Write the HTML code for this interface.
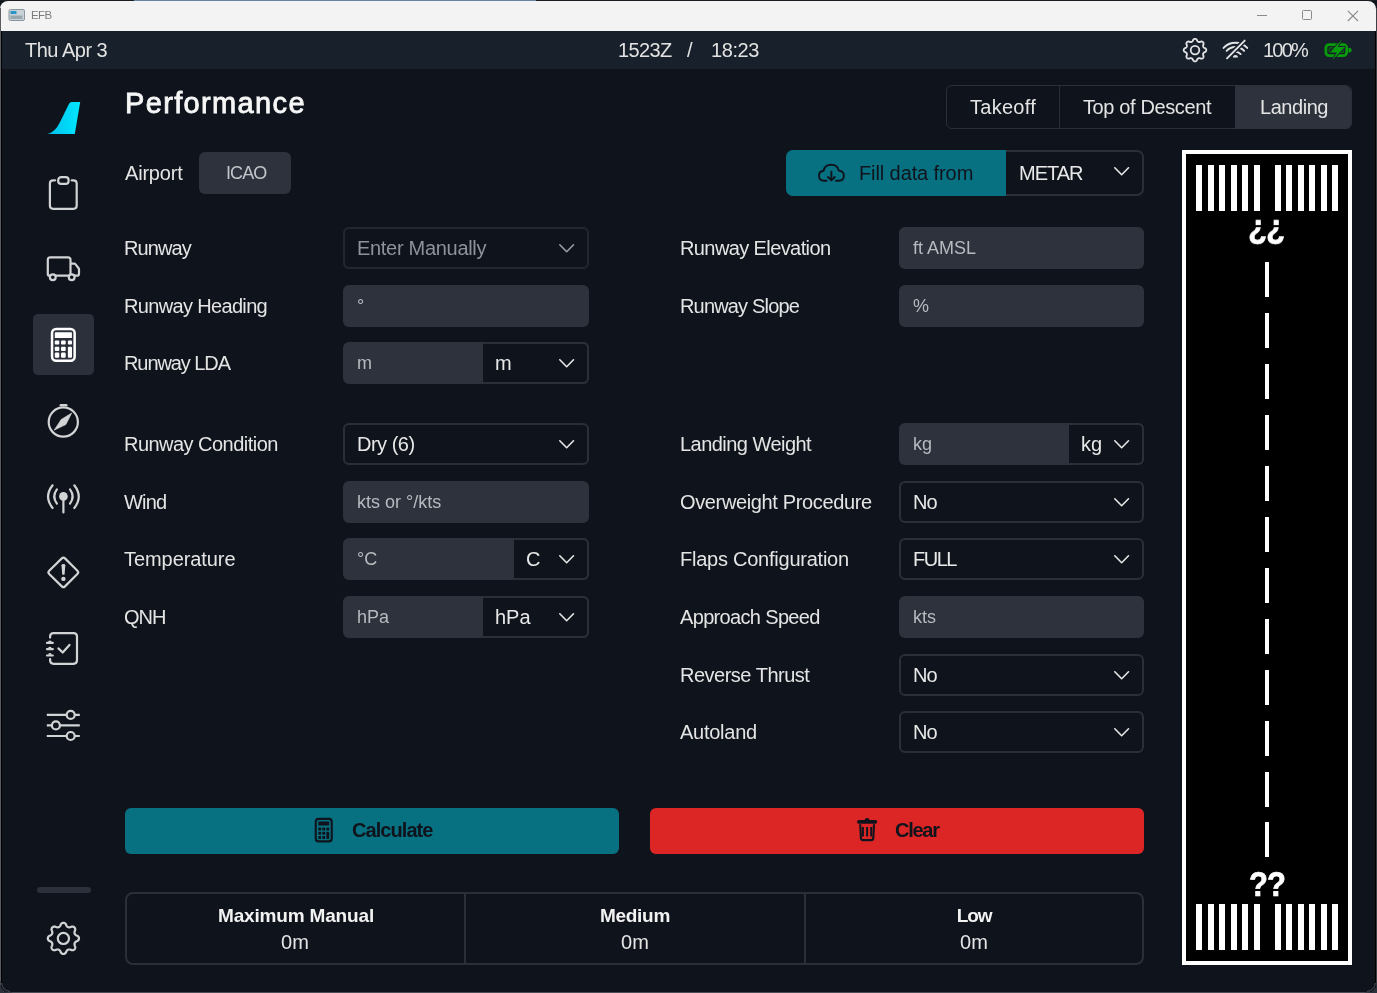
<!DOCTYPE html>
<html><head><meta charset="utf-8">
<style>
*{box-sizing:border-box;margin:0;padding:0}
html,body{width:1377px;height:993px;overflow:hidden;background:#1d2128;font-family:"Liberation Sans",sans-serif;-webkit-font-smoothing:antialiased}
.b,.t,svg{position:absolute}
.t{white-space:nowrap;will-change:transform}
svg{overflow:visible}
#win{position:absolute;left:0;top:0;width:1377px;height:993px;background:#0f141c;overflow:hidden}
</style></head>
<body>
<div id="win">
<div class="b" style="left:0px;top:0px;width:1377px;height:1px;background:#1c1d22"></div>

<div class="b" style="left:134px;top:0px;width:402px;height:1px;background:#6884a4"></div>

<div class="b" style="left:0px;top:1px;width:1376px;height:30px;background:#f3f3f3;border-radius:8px 8px 0 0"></div>

<svg style="left:8px;top:8px" width="18" height="14" viewBox="0 0 18 14"><rect x="1" y="1.5" width="15.5" height="11" rx="1.5" fill="#c9d2d8" stroke="#8a969e" stroke-width="1"/><rect x="2.5" y="3" width="6" height="3" fill="#2a93c9"/><rect x="2.5" y="7.5" width="12" height="3.5" fill="#9aa6ae"/></svg>
<div class="t" style="left:30.5px;top:9.49px;font-size:11.5px;line-height:12.85px;letter-spacing:-0.6px;color:#7c7c7c;">EFB</div>

<div class="b" style="left:1257.2px;top:14.8px;width:9.8px;height:1px;background:#8a8a8a"></div>

<div class="b" style="left:1302px;top:10.2px;width:9.9px;height:9.9px;border:1px solid #8a8a8a;border-radius:1.5px"></div>

<svg style="left:1347px;top:9.5px" width="12" height="12" viewBox="0 0 12 12"><path d="M0.8 0.8 L11 11 M11 0.8 L0.8 11" stroke="#8a8a8a" stroke-width="1.1"/></svg>
<div class="b" style="left:0px;top:31px;width:1376px;height:38.3px;background:#18202b"></div>

<div class="t" style="left:25.4px;top:39.10px;font-size:20px;line-height:22.34px;letter-spacing:-0.5px;color:#e2e2e2;">Thu Apr 3</div>

<div class="t" style="left:618.1px;top:39.10px;font-size:20px;line-height:22.34px;letter-spacing:-0.6px;color:#e2e2e2;">1523Z</div>

<div class="t" style="left:687.0px;top:39.10px;font-size:20px;line-height:22.34px;color:#e2e2e2;">/</div>

<div class="t" style="left:711.0px;top:39.10px;font-size:20px;line-height:22.34px;letter-spacing:-0.4px;color:#e2e2e2;">18:23</div>

<div class="t" style="left:1262.7px;top:39.30px;font-size:20px;line-height:22.34px;letter-spacing:-1.8px;color:#e2e2e2;">100%</div>


<svg style="left:1175px;top:33px" width="40" height="35" viewBox="0 0 40 35"><path d="M20.00 5.80 L20.30 5.82 L20.59 5.89 L20.87 6.00 L21.15 6.15 L21.41 6.35 L21.66 6.60 L21.89 6.93 L22.05 7.46 L22.23 7.79 L22.42 8.06 L22.61 8.28 L22.80 8.48 L23.00 8.64 L23.20 8.77 L23.41 8.88 L23.63 8.95 L23.86 9.00 L24.12 9.02 L24.39 9.02 L24.68 8.99 L25.00 8.94 L25.37 8.84 L25.86 8.57 L26.25 8.50 L26.60 8.50 L26.93 8.55 L27.23 8.63 L27.51 8.76 L27.77 8.92 L27.99 9.11 L28.18 9.33 L28.34 9.59 L28.47 9.87 L28.55 10.17 L28.60 10.50 L28.60 10.85 L28.53 11.24 L28.26 11.73 L28.16 12.10 L28.11 12.42 L28.08 12.71 L28.08 12.98 L28.10 13.24 L28.15 13.47 L28.22 13.69 L28.33 13.90 L28.46 14.10 L28.62 14.30 L28.82 14.49 L29.04 14.68 L29.31 14.87 L29.64 15.05 L30.17 15.21 L30.50 15.44 L30.75 15.69 L30.95 15.95 L31.10 16.23 L31.21 16.51 L31.28 16.80 L31.30 17.10 L31.28 17.40 L31.21 17.69 L31.10 17.97 L30.95 18.25 L30.75 18.51 L30.50 18.76 L30.17 18.99 L29.64 19.15 L29.31 19.33 L29.04 19.52 L28.82 19.71 L28.62 19.90 L28.46 20.10 L28.33 20.30 L28.22 20.51 L28.15 20.73 L28.10 20.96 L28.08 21.22 L28.08 21.49 L28.11 21.78 L28.16 22.10 L28.26 22.47 L28.53 22.96 L28.60 23.35 L28.60 23.70 L28.55 24.03 L28.47 24.33 L28.34 24.61 L28.18 24.87 L27.99 25.09 L27.77 25.28 L27.51 25.44 L27.23 25.57 L26.93 25.65 L26.60 25.70 L26.25 25.70 L25.86 25.63 L25.37 25.36 L25.00 25.26 L24.68 25.21 L24.39 25.18 L24.12 25.18 L23.86 25.20 L23.63 25.25 L23.41 25.32 L23.20 25.43 L23.00 25.56 L22.80 25.72 L22.61 25.92 L22.42 26.14 L22.23 26.41 L22.05 26.74 L21.89 27.27 L21.66 27.60 L21.41 27.85 L21.15 28.05 L20.87 28.20 L20.59 28.31 L20.30 28.38 L20.00 28.40 L19.70 28.38 L19.41 28.31 L19.13 28.20 L18.85 28.05 L18.59 27.85 L18.34 27.60 L18.11 27.27 L17.95 26.74 L17.77 26.41 L17.58 26.14 L17.39 25.92 L17.20 25.72 L17.00 25.56 L16.80 25.43 L16.59 25.32 L16.37 25.25 L16.14 25.20 L15.88 25.18 L15.61 25.18 L15.32 25.21 L15.00 25.26 L14.63 25.36 L14.14 25.63 L13.75 25.70 L13.40 25.70 L13.07 25.65 L12.77 25.57 L12.49 25.44 L12.23 25.28 L12.01 25.09 L11.82 24.87 L11.66 24.61 L11.53 24.33 L11.45 24.03 L11.40 23.70 L11.40 23.35 L11.47 22.96 L11.74 22.47 L11.84 22.10 L11.89 21.78 L11.92 21.49 L11.92 21.22 L11.90 20.96 L11.85 20.73 L11.78 20.51 L11.67 20.30 L11.54 20.10 L11.38 19.90 L11.18 19.71 L10.96 19.52 L10.69 19.33 L10.36 19.15 L9.83 18.99 L9.50 18.76 L9.25 18.51 L9.05 18.25 L8.90 17.97 L8.79 17.69 L8.72 17.40 L8.70 17.10 L8.72 16.80 L8.79 16.51 L8.90 16.23 L9.05 15.95 L9.25 15.69 L9.50 15.44 L9.83 15.21 L10.36 15.05 L10.69 14.87 L10.96 14.68 L11.18 14.49 L11.38 14.30 L11.54 14.10 L11.67 13.90 L11.78 13.69 L11.85 13.47 L11.90 13.24 L11.92 12.98 L11.92 12.71 L11.89 12.42 L11.84 12.10 L11.74 11.73 L11.47 11.24 L11.40 10.85 L11.40 10.50 L11.45 10.17 L11.53 9.87 L11.66 9.59 L11.82 9.33 L12.01 9.11 L12.23 8.92 L12.49 8.76 L12.77 8.63 L13.07 8.55 L13.40 8.50 L13.75 8.50 L14.14 8.57 L14.63 8.84 L15.00 8.94 L15.32 8.99 L15.61 9.02 L15.88 9.02 L16.14 9.00 L16.37 8.95 L16.59 8.88 L16.80 8.77 L17.00 8.64 L17.20 8.48 L17.39 8.28 L17.58 8.06 L17.77 7.79 L17.95 7.46 L18.11 6.93 L18.34 6.60 L18.59 6.35 L18.85 6.15 L19.13 6.00 L19.41 5.89 L19.70 5.82Z" fill="none" stroke="#e2e3e5" stroke-width="1.8" stroke-linejoin="round"/><circle cx="20" cy="17.1" r="4.3" fill="none" stroke="#e2e3e5" stroke-width="1.8"/></svg>
<svg style="left:1215px;top:33px" width="40" height="35" viewBox="0 0 40 35"><g fill="none" stroke="#e2e3e5" stroke-width="1.9" stroke-linecap="round"><path d="M8.55 14.95 A16.2 16.2 0 0 1 32.25 14.95"/><path d="M11.62 17.82 A12 12 0 0 1 29.18 17.82"/><path d="M15.13 21.09 A7.2 7.2 0 0 1 25.67 21.09"/></g><path d="M17.9 24.6 A2.5 2.5 0 0 1 22.9 24.6 Z" fill="#e2e3e5"/><path d="M12 25.3 L29.7 7.6" stroke="#18202b" stroke-width="5" stroke-linecap="round"/><path d="M12 25.3 L29.7 7.6" stroke="#e2e3e5" stroke-width="1.9" stroke-linecap="round"/></svg>
<svg style="left:1320px;top:36px" width="36" height="28" viewBox="0 0 36 28"><rect x="5.9" y="8.6" width="20.7" height="11" rx="3.2" fill="none" stroke="#079a0b" stroke-width="2.8"/><rect x="9.3" y="11.8" width="13.9" height="4.6" rx="0.5" fill="none" stroke="#06700c" stroke-width="1.2"/><path d="M28.4 11.8 A3.2 2.4 0 0 1 28.4 16.6 Z" fill="#079a0b"/><path d="M22 3.8 L9.8 16.6 H16.8 L12.2 24.2 L25 11 H17.8 Z" fill="#079a0b" stroke="#18202b" stroke-width="1.6" paint-order="stroke" stroke-linejoin="round"/></svg>

<div class="b" style="left:33.1px;top:314.2px;width:60.5px;height:60.5px;background:#2b303b;border-radius:5px"></div>

<div class="b" style="left:37.1px;top:886.8px;width:53.9px;height:6px;background:#2b303a;border-radius:3px"></div>


<svg style="left:40px;top:90px" width="50" height="50" viewBox="0 0 50 50"><defs><linearGradient id="lg" x1="0" y1="0" x2="1" y2="0"><stop offset="0" stop-color="#00c0ec"/><stop offset="1" stop-color="#00e6ff"/></linearGradient></defs><path d="M28.8 14.2 Q29.8 12.1 31.8 12.1 L40.2 12.1 L34.8 43.9 L7.4 43.9 Q15 42.5 19.8 32.5 Z" fill="url(#lg)"/></svg>
<svg style="left:40px;top:170px" width="50" height="50" viewBox="0 0 50 50"><path d="M15.1 10.3 H13.2 Q9.9 10.3 9.9 13.6 V35.5 Q9.9 38.8 13.2 38.8 H33.4 Q36.7 38.8 36.7 35.5 V13.6 Q36.7 10.3 33.4 10.3 H31.7" fill="none" stroke="#d2d3d5" stroke-width="2.2" stroke-linecap="round" stroke-linejoin="round"/><rect x="18.2" y="7.1" width="10.4" height="6.8" rx="3" fill="none" stroke="#d2d3d5" stroke-width="2.2" stroke-linecap="round" stroke-linejoin="round"/></svg>
<svg style="left:40px;top:245px" width="50" height="50" viewBox="0 0 50 50"><path d="M9.6 30.7 Q7.8 30.7 7.8 28.9 V14.8 Q7.8 12.3 10.3 12.3 H28 Q30.5 12.3 30.5 14.8 V30.7 M15.9 30.7 H28.6 M30.5 18.6 H34.3 Q35 18.6 35.4 19.1 L38.6 23.2 Q39 23.7 39 24.4 V28.7 Q39 30.7 37 30.7 H34.8" fill="none" stroke="#d2d3d5" stroke-width="2.2" stroke-linecap="round" stroke-linejoin="round"/><circle cx="12.8" cy="32.2" r="2.9" fill="#0f141c" stroke="#d2d3d5" stroke-width="2.2"/><circle cx="31.7" cy="32.2" r="2.9" fill="#0f141c" stroke="#d2d3d5" stroke-width="2.2"/></svg>
<svg style="left:50px;top:327px" width="28" height="36" viewBox="0 0 28 36"><rect x="2.05" y="1.95" width="22.6" height="31.8" rx="4" fill="none" stroke="#ffffff" stroke-width="2.5"/><g fill="#fff"><rect x="4.8" y="5.3" width="17.1" height="5.8" rx="0.6"/><rect x="4.8" y="13.6" width="4.5" height="4" rx="1"/><rect x="11" y="13.6" width="4.7" height="4" rx="1"/><rect x="17.9" y="13.6" width="4.1" height="4" rx="1"/><rect x="4.8" y="19.8" width="4.5" height="4.3" rx="1"/><rect x="11" y="19.8" width="4.7" height="4.3" rx="1"/><rect x="17.9" y="19.8" width="4.1" height="10.9" rx="1"/><rect x="4.8" y="25.6" width="4.5" height="5.1" rx="1.2"/><rect x="11" y="25.6" width="4.7" height="5.1" rx="1.2"/></g></svg>
<svg style="left:38px;top:395px" width="50" height="50" viewBox="0 0 50 50"><circle cx="25.3" cy="27.05" r="14.6" fill="none" stroke="#d2d3d5" stroke-width="2.2" stroke-linecap="round" stroke-linejoin="round"/><path d="M21.6 11.2 V10.3 Q21.6 9 22.9 9 H28.2 Q29.5 9 29.5 10.3 V11.2 Z" fill="#d2d3d5"/><path d="M33.7 18.1 L27.9 29.5 L16.1 35.2 L23.2 24.4 Z" fill="#d2d3d5" stroke="#d2d3d5" stroke-width="0.6" stroke-linejoin="round"/></svg>
<svg style="left:38px;top:472px" width="50" height="50" viewBox="0 0 50 50"><circle cx="25.4" cy="24.4" r="4.3" fill="#d2d3d5"/><path d="M25.4 26 V40.4" fill="none" stroke="#d2d3d5" stroke-width="2.2" stroke-linecap="round" stroke-linejoin="round"/><path d="M18.9 17.4 Q13.6 24.5 18.9 31.7 M32 17.4 Q37.3 24.5 32 31.7 M14.6 13.3 Q5.6 24.7 14.6 36 M36.3 13.3 Q45.2 24.7 36.3 36" fill="none" stroke="#d2d3d5" stroke-width="2.2" stroke-linecap="round" stroke-linejoin="round"/></svg>
<svg style="left:38px;top:548px" width="50" height="50" viewBox="0 0 50 50"><path d="M23.8 10.4 Q25.4 8.8 27 10.4 L39.4 22.8 Q41 24.4 39.4 26 L27 38.4 Q25.4 40 23.8 38.4 L11.2 26 Q9.6 24.4 11.2 22.8 Z" fill="none" stroke="#d2d3d5" stroke-width="2.2" stroke-linecap="round" stroke-linejoin="round"/><path d="M23.5 17.2 Q23.5 16.1 25.4 16.1 Q27.3 16.1 27.3 17.2 L26.6 26.2 Q26.5 26.8 25.4 26.8 Q24.3 26.8 24.2 26.2 Z" fill="#d2d3d5"/><circle cx="25.4" cy="30.9" r="2.2" fill="#d2d3d5"/></svg>
<svg style="left:38px;top:623px" width="50" height="50" viewBox="0 0 50 50"><path d="M12.1 14.6 V13.6 Q12.1 10.1 15.6 10.1 H35.5 Q39 10.1 39 13.6 V37.3 Q39 40.8 35.5 40.8 H15.6 Q12.1 40.8 12.1 37.3 V36" fill="none" stroke="#d2d3d5" stroke-width="2.2" stroke-linecap="round" stroke-linejoin="round"/><path d="M9 19.9 H14.8 M9 26.2 H14.8 M9 32.5 H14.8" fill="none" stroke="#d2d3d5" stroke-width="2.2" stroke-linecap="round"/><path d="M10.6 19 Q11.9 17.2 13.2 19 M10.6 25.3 Q11.9 23.5 13.2 25.3 M10.6 31.6 Q11.9 29.8 13.2 31.6" fill="#d2d3d5" stroke="#d2d3d5" stroke-width="1.4"/><path d="M20.4 25.4 L24.7 29.5 L31.5 21.9" fill="none" stroke="#d2d3d5" stroke-width="2.2" stroke-linecap="round" stroke-linejoin="round"/></svg>
<svg style="left:38px;top:700px" width="50" height="50" viewBox="0 0 50 50"><path d="M8.8 14.9 H28.7 M36.7 14.9 H41.8 M8.8 25.4 H13.9 M21.9 25.4 H41.8 M8.8 36 H28.7 M36.7 36 H41.8" fill="none" stroke="#d2d3d5" stroke-width="2.2" stroke-linecap="butt"/><circle cx="32.7" cy="14.9" r="4" fill="none" stroke="#d2d3d5" stroke-width="2.2" stroke-linecap="round" stroke-linejoin="round"/><circle cx="17.9" cy="25.4" r="4" fill="none" stroke="#d2d3d5" stroke-width="2.2" stroke-linecap="round" stroke-linejoin="round"/><circle cx="32.7" cy="36" r="4" fill="none" stroke="#d2d3d5" stroke-width="2.2" stroke-linecap="round" stroke-linejoin="round"/></svg>
<svg style="left:38px;top:913px" width="50" height="50" viewBox="0 0 50 50"><path d="M25.40 9.80 L25.81 9.83 L26.21 9.93 L26.61 10.08 L26.99 10.30 L27.35 10.58 L27.69 10.93 L28.00 11.39 L28.22 12.15 L28.47 12.61 L28.73 12.98 L28.98 13.30 L29.24 13.57 L29.51 13.80 L29.78 13.99 L30.07 14.13 L30.37 14.23 L30.70 14.29 L31.05 14.32 L31.42 14.31 L31.83 14.27 L32.27 14.19 L32.78 14.04 L33.47 13.66 L34.01 13.55 L34.50 13.54 L34.96 13.60 L35.38 13.72 L35.77 13.88 L36.12 14.10 L36.43 14.37 L36.70 14.68 L36.92 15.03 L37.08 15.42 L37.20 15.84 L37.26 16.30 L37.25 16.79 L37.14 17.33 L36.76 18.02 L36.61 18.53 L36.53 18.97 L36.49 19.38 L36.48 19.75 L36.51 20.10 L36.57 20.43 L36.67 20.73 L36.81 21.02 L37.00 21.29 L37.23 21.56 L37.50 21.82 L37.82 22.07 L38.19 22.33 L38.65 22.58 L39.41 22.80 L39.87 23.11 L40.22 23.45 L40.50 23.81 L40.72 24.19 L40.87 24.59 L40.97 24.99 L41.00 25.40 L40.97 25.81 L40.87 26.21 L40.72 26.61 L40.50 26.99 L40.22 27.35 L39.87 27.69 L39.41 28.00 L38.65 28.22 L38.19 28.47 L37.82 28.73 L37.50 28.98 L37.23 29.24 L37.00 29.51 L36.81 29.78 L36.67 30.07 L36.57 30.37 L36.51 30.70 L36.48 31.05 L36.49 31.42 L36.53 31.83 L36.61 32.27 L36.76 32.78 L37.14 33.47 L37.25 34.01 L37.26 34.50 L37.20 34.96 L37.08 35.38 L36.92 35.77 L36.70 36.12 L36.43 36.43 L36.12 36.70 L35.77 36.92 L35.38 37.08 L34.96 37.20 L34.50 37.26 L34.01 37.25 L33.47 37.14 L32.78 36.76 L32.27 36.61 L31.83 36.53 L31.42 36.49 L31.05 36.48 L30.70 36.51 L30.37 36.57 L30.07 36.67 L29.78 36.81 L29.51 37.00 L29.24 37.23 L28.98 37.50 L28.73 37.82 L28.47 38.19 L28.22 38.65 L28.00 39.41 L27.69 39.87 L27.35 40.22 L26.99 40.50 L26.61 40.72 L26.21 40.87 L25.81 40.97 L25.40 41.00 L24.99 40.97 L24.59 40.87 L24.19 40.72 L23.81 40.50 L23.45 40.22 L23.11 39.87 L22.80 39.41 L22.58 38.65 L22.33 38.19 L22.07 37.82 L21.82 37.50 L21.56 37.23 L21.29 37.00 L21.02 36.81 L20.73 36.67 L20.43 36.57 L20.10 36.51 L19.75 36.48 L19.38 36.49 L18.97 36.53 L18.53 36.61 L18.02 36.76 L17.33 37.14 L16.79 37.25 L16.30 37.26 L15.84 37.20 L15.42 37.08 L15.03 36.92 L14.68 36.70 L14.37 36.43 L14.10 36.12 L13.88 35.77 L13.72 35.38 L13.60 34.96 L13.54 34.50 L13.55 34.01 L13.66 33.47 L14.04 32.78 L14.19 32.27 L14.27 31.83 L14.31 31.42 L14.32 31.05 L14.29 30.70 L14.23 30.37 L14.13 30.07 L13.99 29.78 L13.80 29.51 L13.57 29.24 L13.30 28.98 L12.98 28.73 L12.61 28.47 L12.15 28.22 L11.39 28.00 L10.93 27.69 L10.58 27.35 L10.30 26.99 L10.08 26.61 L9.93 26.21 L9.83 25.81 L9.80 25.40 L9.83 24.99 L9.93 24.59 L10.08 24.19 L10.30 23.81 L10.58 23.45 L10.93 23.11 L11.39 22.80 L12.15 22.58 L12.61 22.33 L12.98 22.07 L13.30 21.82 L13.57 21.56 L13.80 21.29 L13.99 21.02 L14.13 20.73 L14.23 20.43 L14.29 20.10 L14.32 19.75 L14.31 19.38 L14.27 18.97 L14.19 18.53 L14.04 18.02 L13.66 17.33 L13.55 16.79 L13.54 16.30 L13.60 15.84 L13.72 15.42 L13.88 15.03 L14.10 14.68 L14.37 14.37 L14.68 14.10 L15.03 13.88 L15.42 13.72 L15.84 13.60 L16.30 13.54 L16.79 13.55 L17.33 13.66 L18.02 14.04 L18.53 14.19 L18.97 14.27 L19.38 14.31 L19.75 14.32 L20.10 14.29 L20.43 14.23 L20.73 14.13 L21.02 13.99 L21.29 13.80 L21.56 13.57 L21.82 13.30 L22.07 12.98 L22.33 12.61 L22.58 12.15 L22.80 11.39 L23.11 10.93 L23.45 10.58 L23.81 10.30 L24.19 10.08 L24.59 9.93 L24.99 9.83Z" fill="none" stroke="#d2d3d5" stroke-width="2.2" stroke-linecap="round" stroke-linejoin="round"/><circle cx="25.4" cy="25.4" r="5.6" fill="none" stroke="#d2d3d5" stroke-width="2.2" stroke-linecap="round" stroke-linejoin="round"/></svg>

<div class="t" style="left:124.6px;top:87.45px;font-size:29px;line-height:32.39px;letter-spacing:1.35px;color:#f6f6f6;-webkit-text-stroke:0.85px #f6f6f6;">Performance</div>

<div class="b" style="left:946px;top:85px;width:406px;height:44px;border:1.2px solid #2a2f38;border-radius:6px"></div>

<div class="b" style="left:1235.2px;top:85.5px;width:116.3px;height:43px;background:#2d323c;border-radius:0 5.5px 5.5px 0"></div>

<div class="b" style="left:1059px;top:86px;width:1.2px;height:42px;background:#2a2f38"></div>

<div class="t" style="left:969.9px;top:95.50px;font-size:20px;line-height:22.34px;letter-spacing:0.27px;color:#e4e4e4;">Takeoff</div>

<div class="t" style="left:1083.3px;top:95.50px;font-size:20px;line-height:22.34px;letter-spacing:-0.38px;color:#e4e4e4;">Top of Descent</div>

<div class="t" style="left:1259.6px;top:95.50px;font-size:20px;line-height:22.34px;letter-spacing:-0.45px;color:#e4e4e4;">Landing</div>

<div class="t" style="left:125.3px;top:162.10px;font-size:20px;line-height:22.34px;letter-spacing:-0.2px;color:#e4e4e4;">Airport</div>

<div class="b" style="left:199.2px;top:152px;width:91.9px;height:42px;background:#2d323c;border-radius:6px"></div>

<div class="t" style="left:226.0px;top:163.11px;font-size:18px;line-height:20.11px;letter-spacing:-0.9px;color:#c2c5ca;">ICAO</div>

<div class="b" style="left:786px;top:150px;width:357.5px;height:46px;border:2px solid #2a2f38;border-radius:7px"></div>

<div class="b" style="left:786px;top:150px;width:220px;height:46px;background:#077081;border-radius:7px 0 0 7px"></div>

<svg style="left:817px;top:162px" width="30" height="22" viewBox="0 0 30 22"><path d="M9.5 18.7 H7 Q2 18.7 2 13.7 Q2 9.3 6.6 8.8 Q7.6 2.7 14.3 2.7 Q20.6 2.7 21.8 8.6 Q26.9 9 26.9 13.8 Q26.9 18.7 21.8 18.7 H19" fill="none" stroke="#0f141c" stroke-width="1.9" stroke-linecap="round" stroke-linejoin="round"/><path d="M14.4 9.6 V18.3 M11 15 L14.4 18.4 L17.8 15" fill="none" stroke="#0f141c" stroke-width="1.9" stroke-linecap="round" stroke-linejoin="round"/></svg>
<div class="t" style="left:859.0px;top:162.10px;font-size:20px;line-height:22.34px;letter-spacing:-0.1px;color:#0f141c;">Fill data from</div>

<div class="t" style="left:1019.2px;top:162.10px;font-size:20px;line-height:22.34px;letter-spacing:-1.0px;color:#e8e8e8;">METAR</div>

<svg style="left:1114px;top:167.00px" width="16" height="9" viewBox="0 0 16 9"><path d="M0.8 0.8 L7.65 7.7 L14.5 0.8" fill="none" stroke="#e6e6e6" stroke-width="1.6" stroke-linecap="round" stroke-linejoin="round"/></svg>
<div class="t" style="left:123.8px;top:236.90px;font-size:20px;line-height:22.34px;letter-spacing:-0.9px;color:#e4e4e4;">Runway</div>
<div class="b" style="left:343px;top:227px;width:246px;height:42px;border:2px solid #23282f;border-radius:6px"></div>
<div class="t" style="left:356.5px;top:236.90px;font-size:20px;line-height:22.34px;letter-spacing:-0.3px;color:#8e9299;">Enter Manually</div>
<svg style="left:558.5px;top:243.50px" width="16" height="9" viewBox="0 0 16 9"><path d="M0.8 0.8 L7.65 7.7 L14.5 0.8" fill="none" stroke="#9a9da3" stroke-width="1.6" stroke-linecap="round" stroke-linejoin="round"/></svg><div class="t" style="left:123.8px;top:294.90px;font-size:20px;line-height:22.34px;letter-spacing:-0.66px;color:#e4e4e4;">Runway Heading</div>
<div class="b" style="left:343px;top:285px;width:246px;height:42px;background:#2d323c;border-radius:6px"></div>
<div class="t" style="left:356.5px;top:296.31px;font-size:18px;line-height:20.11px;color:#b7babf;">&deg;</div>
<div class="t" style="left:123.8px;top:351.90px;font-size:20px;line-height:22.34px;letter-spacing:-1.08px;color:#e4e4e4;">Runway LDA</div>
<div class="b" style="left:343px;top:342px;width:246px;height:42px;background:#2d323c;border-radius:6px"></div>
<div class="t" style="left:356.5px;top:353.31px;font-size:18px;line-height:20.11px;color:#b7babf;">m</div>
<div class="b" style="left:483px;top:342px;width:106px;height:42px;background:#0f141c;border:2px solid #2a2f38;border-left:none;border-radius:0 6px 6px 0"></div>
<div class="t" style="left:495.0px;top:351.90px;font-size:20px;line-height:22.34px;color:#e8e8e8;">m</div>
<svg style="left:558.5px;top:358.50px" width="16" height="9" viewBox="0 0 16 9"><path d="M0.8 0.8 L7.65 7.7 L14.5 0.8" fill="none" stroke="#e6e6e6" stroke-width="1.6" stroke-linecap="round" stroke-linejoin="round"/></svg><div class="t" style="left:123.8px;top:432.90px;font-size:20px;line-height:22.34px;letter-spacing:-0.53px;color:#e4e4e4;">Runway Condition</div>
<div class="b" style="left:343px;top:423px;width:246px;height:42px;border:2px solid #2a2f38;border-radius:6px"></div>
<div class="t" style="left:356.5px;top:432.90px;font-size:20px;line-height:22.34px;letter-spacing:-0.5px;color:#e8e8e8;">Dry (6)</div>
<svg style="left:558.5px;top:439.50px" width="16" height="9" viewBox="0 0 16 9"><path d="M0.8 0.8 L7.65 7.7 L14.5 0.8" fill="none" stroke="#e6e6e6" stroke-width="1.6" stroke-linecap="round" stroke-linejoin="round"/></svg><div class="t" style="left:123.8px;top:490.90px;font-size:20px;line-height:22.34px;letter-spacing:-0.8px;color:#e4e4e4;">Wind</div>
<div class="b" style="left:343px;top:481px;width:246px;height:42px;background:#2d323c;border-radius:6px"></div>
<div class="t" style="left:356.5px;top:492.31px;font-size:18px;line-height:20.11px;color:#b7babf;">kts or &deg;/kts</div>
<div class="t" style="left:123.8px;top:547.90px;font-size:20px;line-height:22.34px;letter-spacing:-0.07px;color:#e4e4e4;">Temperature</div>
<div class="b" style="left:343px;top:538px;width:246px;height:42px;background:#2d323c;border-radius:6px"></div>
<div class="t" style="left:356.5px;top:549.31px;font-size:18px;line-height:20.11px;color:#b7babf;">&deg;C</div>
<div class="b" style="left:514px;top:538px;width:75px;height:42px;background:#0f141c;border:2px solid #2a2f38;border-left:none;border-radius:0 6px 6px 0"></div>
<div class="t" style="left:526.0px;top:547.90px;font-size:20px;line-height:22.34px;color:#e8e8e8;">C</div>
<svg style="left:558.5px;top:554.50px" width="16" height="9" viewBox="0 0 16 9"><path d="M0.8 0.8 L7.65 7.7 L14.5 0.8" fill="none" stroke="#e6e6e6" stroke-width="1.6" stroke-linecap="round" stroke-linejoin="round"/></svg><div class="t" style="left:123.8px;top:605.90px;font-size:20px;line-height:22.34px;letter-spacing:-1.05px;color:#e4e4e4;">QNH</div>
<div class="b" style="left:343px;top:596px;width:246px;height:42px;background:#2d323c;border-radius:6px"></div>
<div class="t" style="left:356.5px;top:607.31px;font-size:18px;line-height:20.11px;color:#b7babf;">hPa</div>
<div class="b" style="left:483px;top:596px;width:106px;height:42px;background:#0f141c;border:2px solid #2a2f38;border-left:none;border-radius:0 6px 6px 0"></div>
<div class="t" style="left:495.0px;top:605.90px;font-size:20px;line-height:22.34px;color:#e8e8e8;">hPa</div>
<svg style="left:558.5px;top:612.50px" width="16" height="9" viewBox="0 0 16 9"><path d="M0.8 0.8 L7.65 7.7 L14.5 0.8" fill="none" stroke="#e6e6e6" stroke-width="1.6" stroke-linecap="round" stroke-linejoin="round"/></svg><div class="t" style="left:680.2px;top:236.90px;font-size:20px;line-height:22.34px;letter-spacing:-0.6px;color:#e4e4e4;">Runway Elevation</div>
<div class="b" style="left:899px;top:227px;width:245px;height:42px;background:#2d323c;border-radius:6px"></div>
<div class="t" style="left:912.5px;top:238.31px;font-size:18px;line-height:20.11px;color:#b7babf;">ft AMSL</div>
<div class="t" style="left:680.2px;top:294.90px;font-size:20px;line-height:22.34px;letter-spacing:-0.83px;color:#e4e4e4;">Runway Slope</div>
<div class="b" style="left:899px;top:285px;width:245px;height:42px;background:#2d323c;border-radius:6px"></div>
<div class="t" style="left:912.5px;top:296.31px;font-size:18px;line-height:20.11px;color:#b7babf;">%</div>
<div class="t" style="left:680.2px;top:432.90px;font-size:20px;line-height:22.34px;letter-spacing:-0.54px;color:#e4e4e4;">Landing Weight</div>
<div class="b" style="left:899px;top:423px;width:245px;height:42px;background:#2d323c;border-radius:6px"></div>
<div class="t" style="left:912.5px;top:434.31px;font-size:18px;line-height:20.11px;color:#b7babf;">kg</div>
<div class="b" style="left:1069px;top:423px;width:75px;height:42px;background:#0f141c;border:2px solid #2a2f38;border-left:none;border-radius:0 6px 6px 0"></div>
<div class="t" style="left:1081.0px;top:432.90px;font-size:20px;line-height:22.34px;color:#e8e8e8;">kg</div>
<svg style="left:1113.5px;top:439.50px" width="16" height="9" viewBox="0 0 16 9"><path d="M0.8 0.8 L7.65 7.7 L14.5 0.8" fill="none" stroke="#e6e6e6" stroke-width="1.6" stroke-linecap="round" stroke-linejoin="round"/></svg><div class="t" style="left:680.2px;top:490.90px;font-size:20px;line-height:22.34px;letter-spacing:-0.36px;color:#e4e4e4;">Overweight Procedure</div>
<div class="b" style="left:899px;top:481px;width:245px;height:42px;border:2px solid #2a2f38;border-radius:6px"></div>
<div class="t" style="left:912.5px;top:490.90px;font-size:20px;line-height:22.34px;letter-spacing:-1px;color:#e8e8e8;">No</div>
<svg style="left:1113.5px;top:497.50px" width="16" height="9" viewBox="0 0 16 9"><path d="M0.8 0.8 L7.65 7.7 L14.5 0.8" fill="none" stroke="#e6e6e6" stroke-width="1.6" stroke-linecap="round" stroke-linejoin="round"/></svg><div class="t" style="left:680.2px;top:547.90px;font-size:20px;line-height:22.34px;letter-spacing:-0.24px;color:#e4e4e4;">Flaps Configuration</div>
<div class="b" style="left:899px;top:538px;width:245px;height:42px;border:2px solid #2a2f38;border-radius:6px"></div>
<div class="t" style="left:912.5px;top:547.90px;font-size:20px;line-height:22.34px;letter-spacing:-1.5px;color:#e8e8e8;">FULL</div>
<svg style="left:1113.5px;top:554.50px" width="16" height="9" viewBox="0 0 16 9"><path d="M0.8 0.8 L7.65 7.7 L14.5 0.8" fill="none" stroke="#e6e6e6" stroke-width="1.6" stroke-linecap="round" stroke-linejoin="round"/></svg><div class="t" style="left:680.2px;top:605.90px;font-size:20px;line-height:22.34px;letter-spacing:-0.66px;color:#e4e4e4;">Approach Speed</div>
<div class="b" style="left:899px;top:596px;width:245px;height:42px;background:#2d323c;border-radius:6px"></div>
<div class="t" style="left:912.5px;top:607.31px;font-size:18px;line-height:20.11px;color:#b7babf;">kts</div>
<div class="t" style="left:680.2px;top:663.90px;font-size:20px;line-height:22.34px;letter-spacing:-0.5px;color:#e4e4e4;">Reverse Thrust</div>
<div class="b" style="left:899px;top:654px;width:245px;height:42px;border:2px solid #2a2f38;border-radius:6px"></div>
<div class="t" style="left:912.5px;top:663.90px;font-size:20px;line-height:22.34px;letter-spacing:-1px;color:#e8e8e8;">No</div>
<svg style="left:1113.5px;top:670.50px" width="16" height="9" viewBox="0 0 16 9"><path d="M0.8 0.8 L7.65 7.7 L14.5 0.8" fill="none" stroke="#e6e6e6" stroke-width="1.6" stroke-linecap="round" stroke-linejoin="round"/></svg><div class="t" style="left:680.2px;top:720.90px;font-size:20px;line-height:22.34px;letter-spacing:-0.26px;color:#e4e4e4;">Autoland</div>
<div class="b" style="left:899px;top:711px;width:245px;height:42px;border:2px solid #2a2f38;border-radius:6px"></div>
<div class="t" style="left:912.5px;top:720.90px;font-size:20px;line-height:22.34px;letter-spacing:-1px;color:#e8e8e8;">No</div>
<svg style="left:1113.5px;top:727.50px" width="16" height="9" viewBox="0 0 16 9"><path d="M0.8 0.8 L7.65 7.7 L14.5 0.8" fill="none" stroke="#e6e6e6" stroke-width="1.6" stroke-linecap="round" stroke-linejoin="round"/></svg>
<div class="b" style="left:125px;top:807.5px;width:494.2px;height:46px;background:#077081;border-radius:6px"></div>

<svg style="left:314px;top:817px" width="20" height="26.5" viewBox="0 0 20 25.5" preserveAspectRatio="none"><rect x="1.75" y="1.75" width="16" height="21.7" rx="2.8" fill="none" stroke="#0f141c" stroke-width="2.1"/><g fill="#0f141c"><rect x="4.3" y="4.3" width="10.9" height="3.9"/><rect x="4.3" y="10.2" width="2.9" height="2.9" rx="0.6"/><rect x="8.3" y="10.2" width="2.9" height="2.9" rx="0.6"/><rect x="12.3" y="10.2" width="2.9" height="2.9" rx="0.6"/><rect x="4.3" y="14.3" width="2.9" height="2.9" rx="0.6"/><rect x="8.3" y="14.3" width="2.9" height="2.9" rx="0.6"/><rect x="12.3" y="14.3" width="2.9" height="6.8" rx="0.6"/><rect x="4.3" y="18.2" width="2.9" height="2.9" rx="0.6"/><rect x="8.3" y="18.2" width="2.9" height="2.9" rx="0.6"/></g></svg>
<div class="t" style="left:351.5px;top:819.20px;font-size:20px;line-height:22.34px;font-weight:bold;letter-spacing:-0.94px;color:#0f141c;">Calculate</div>

<div class="b" style="left:650px;top:807.5px;width:494px;height:46px;background:#dc2626;border-radius:6px"></div>

<svg style="left:855px;top:816px" width="24" height="27" viewBox="0 0 24 27"><path d="M9.6 4.2 Q9.8 1.9 12.1 1.9 Q14.4 1.9 14.6 4.2 Z" fill="#0f141c"/><rect x="3" y="4.9" width="18.2" height="1.8" rx="0.9" fill="none" stroke="#0f141c" stroke-width="2"/><path d="M5.2 8.2 L5.9 22.2 Q6.1 24.1 8 24.1 H16.2 Q18.1 24.1 18.3 22.2 L19 8.2" fill="none" stroke="#0f141c" stroke-width="2.1" stroke-linejoin="round"/><path d="M7.9 11 V20.6 M12.1 11 V20.6 M16.2 11 V20.6" stroke="#0f141c" stroke-width="2"/></svg>
<div class="t" style="left:895.0px;top:819.00px;font-size:20px;line-height:22.34px;font-weight:bold;letter-spacing:-1.25px;color:#0f141c;">Clear</div>

<div class="b" style="left:125.4px;top:892px;width:1018.4px;height:73px;border:2.2px solid #2a2f38;border-radius:8px"></div>

<div class="b" style="left:464.2px;top:893px;width:1.8px;height:71.2px;background:#2a2f38"></div>

<div class="b" style="left:803.8px;top:893px;width:1.8px;height:71.2px;background:#2a2f38"></div>

<div class="t" style="left:95.7px;width:400px;text-align:center;top:904.80px;font-size:19px;line-height:21.22px;font-weight:bold;letter-spacing:-0.17px;color:#f2f2f2">Maximum Manual</div>

<div class="t" style="left:95.2px;width:400px;text-align:center;top:930.80px;font-size:20px;line-height:22.34px;color:#e4e4e4">0m</div>

<div class="t" style="left:435.0px;width:400px;text-align:center;top:904.80px;font-size:19px;line-height:21.22px;font-weight:bold;letter-spacing:-0.3px;color:#f2f2f2">Medium</div>

<div class="t" style="left:434.7px;width:400px;text-align:center;top:930.80px;font-size:20px;line-height:22.34px;color:#e4e4e4">0m</div>

<div class="t" style="left:773.7px;width:400px;text-align:center;top:904.80px;font-size:19px;line-height:21.22px;font-weight:bold;letter-spacing:-1.1px;color:#f2f2f2">Low</div>

<div class="t" style="left:773.7px;width:400px;text-align:center;top:930.80px;font-size:20px;line-height:22.34px;color:#e4e4e4">0m</div>


<div class="b" style="left:1182px;top:150px;width:170px;height:815px;background:#000;border:4px solid #fff"></div>

<div class="b" style="left:1196px;top:165px;width:6.1px;height:46.2px;background:#fff"></div>
<div class="b" style="left:1207.5px;top:165px;width:6.1px;height:46.2px;background:#fff"></div>
<div class="b" style="left:1219px;top:165px;width:6.1px;height:46.2px;background:#fff"></div>
<div class="b" style="left:1230.5px;top:165px;width:6.1px;height:46.2px;background:#fff"></div>
<div class="b" style="left:1242px;top:165px;width:6.1px;height:46.2px;background:#fff"></div>
<div class="b" style="left:1253.5px;top:165px;width:6.1px;height:46.2px;background:#fff"></div>
<div class="b" style="left:1274.5px;top:165px;width:6.1px;height:46.2px;background:#fff"></div>
<div class="b" style="left:1286px;top:165px;width:6.1px;height:46.2px;background:#fff"></div>
<div class="b" style="left:1297.5px;top:165px;width:6.1px;height:46.2px;background:#fff"></div>
<div class="b" style="left:1309px;top:165px;width:6.1px;height:46.2px;background:#fff"></div>
<div class="b" style="left:1320.5px;top:165px;width:6.1px;height:46.2px;background:#fff"></div>
<div class="b" style="left:1332px;top:165px;width:6.1px;height:46.2px;background:#fff"></div>
<div class="b" style="left:1196px;top:903.5px;width:6.1px;height:46.2px;background:#fff"></div>
<div class="b" style="left:1207.5px;top:903.5px;width:6.1px;height:46.2px;background:#fff"></div>
<div class="b" style="left:1219px;top:903.5px;width:6.1px;height:46.2px;background:#fff"></div>
<div class="b" style="left:1230.5px;top:903.5px;width:6.1px;height:46.2px;background:#fff"></div>
<div class="b" style="left:1242px;top:903.5px;width:6.1px;height:46.2px;background:#fff"></div>
<div class="b" style="left:1253.5px;top:903.5px;width:6.1px;height:46.2px;background:#fff"></div>
<div class="b" style="left:1274.5px;top:903.5px;width:6.1px;height:46.2px;background:#fff"></div>
<div class="b" style="left:1286px;top:903.5px;width:6.1px;height:46.2px;background:#fff"></div>
<div class="b" style="left:1297.5px;top:903.5px;width:6.1px;height:46.2px;background:#fff"></div>
<div class="b" style="left:1309px;top:903.5px;width:6.1px;height:46.2px;background:#fff"></div>
<div class="b" style="left:1320.5px;top:903.5px;width:6.1px;height:46.2px;background:#fff"></div>
<div class="b" style="left:1332px;top:903.5px;width:6.1px;height:46.2px;background:#fff"></div>
<div class="b" style="left:1265px;top:262.0px;width:4px;height:35px;background:#fff"></div>
<div class="b" style="left:1265px;top:312.95px;width:4px;height:35px;background:#fff"></div>
<div class="b" style="left:1265px;top:363.9px;width:4px;height:35px;background:#fff"></div>
<div class="b" style="left:1265px;top:414.85px;width:4px;height:35px;background:#fff"></div>
<div class="b" style="left:1265px;top:465.8px;width:4px;height:35px;background:#fff"></div>
<div class="b" style="left:1265px;top:516.75px;width:4px;height:35px;background:#fff"></div>
<div class="b" style="left:1265px;top:567.7px;width:4px;height:35px;background:#fff"></div>
<div class="b" style="left:1265px;top:618.65px;width:4px;height:35px;background:#fff"></div>
<div class="b" style="left:1265px;top:669.6px;width:4px;height:35px;background:#fff"></div>
<div class="b" style="left:1265px;top:720.55px;width:4px;height:35px;background:#fff"></div>
<div class="b" style="left:1265px;top:771.5px;width:4px;height:35px;background:#fff"></div>
<div class="b" style="left:1265px;top:822.45px;width:4px;height:35px;background:#fff"></div>

<div class="t" style="left:1242px;top:213.5px;width:50px;text-align:center;font-size:31px;line-height:34px;font-weight:bold;color:#fff;letter-spacing:-1px;-webkit-text-stroke:0.6px #fff;transform:rotate(180deg) scaleY(1.12)">??</div>
<div class="t" style="left:1242px;top:867.5px;width:50px;text-align:center;font-size:31px;line-height:34px;font-weight:bold;color:#fff;letter-spacing:-1px;-webkit-text-stroke:0.6px #fff;transform:scaleY(1.12)">??</div>

<div class="b" style="left:0px;top:8px;width:1px;height:985px;background:#5a5d62"></div>

<div class="b" style="left:1px;top:31px;width:1px;height:962px;background:#000"></div>

<div class="b" style="left:1375px;top:31px;width:1px;height:962px;background:#000"></div>

<div class="b" style="left:1376px;top:8px;width:1px;height:985px;background:#3c3f44"></div>

<div class="b" style="left:0px;top:992px;width:1377px;height:1px;background:#4a4d55"></div>

<svg style="left:0;top:981px" width="12" height="12" viewBox="0 0 12 12"><path d="M0 0 L0 12 L12 12 L12 11.5 L10 11.5 A9 9 0 0 1 0.5 2 L0.5 0 Z" fill="#2c323c"/><path d="M1.5 2 A9 9 0 0 0 10 10.5" fill="none" stroke="#4a4f57" stroke-width="1"/></svg>
<svg style="left:1365px;top:981px" width="12" height="12" viewBox="0 0 12 12"><path d="M12 0 L12 12 L0 12 L0 11.5 L2 11.5 A9 9 0 0 0 11.5 2 L11.5 0 Z" fill="#2c323c"/><path d="M10.5 2 A9 9 0 0 1 2 10.5" fill="none" stroke="#4a4f57" stroke-width="1"/></svg>
</div>
</body></html>
